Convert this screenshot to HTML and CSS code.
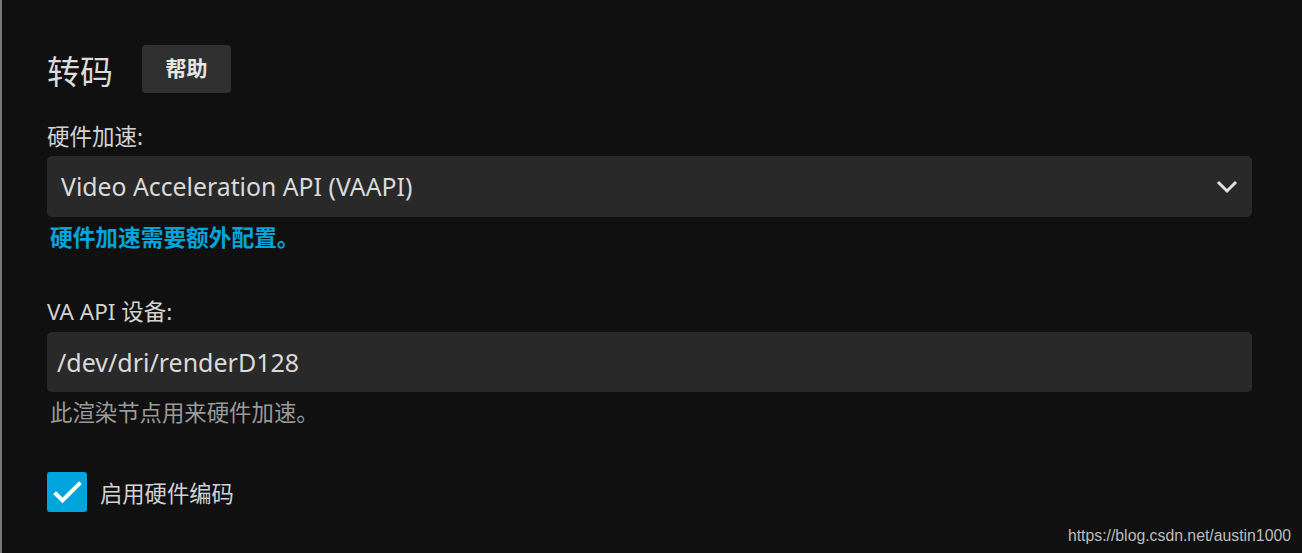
FILE: index.html
```html
<!DOCTYPE html>
<html lang="zh">
<head>
<meta charset="utf-8">
<title>转码</title>
<link rel="stylesheet" href="styles.css">
</head>
<body>
<div class="page">
  <div class="header">
    <h2 class="title">转码</h2>
    <button class="help">帮助</button>
  </div>

  <label class="label label-first">硬件加速:</label>
  <div class="select">
    <span class="select-text">Video Acceleration API (VAAPI)</span>
    <svg class="chevron" width="24" height="24" viewBox="0 0 24 24"><path d="M3 7 L12 16 L21 7" fill="none" stroke="#e0e0e0" stroke-width="3"/></svg>
  </div>
  <div class="hint">硬件加速需要额外配置。</div>

  <label class="label label-second">VA API 设备:</label>
  <div class="input">/dev/dri/renderD128</div>
  <div class="desc">此渲染节点用来硬件加速。</div>

  <div class="check-row">
    <span class="checkbox">
      <svg width="40" height="40" viewBox="0 0 40 40"><path d="M9 22 L15.5 28.5 L32 12" fill="none" stroke="#fff" stroke-width="4" stroke-linecap="square"/></svg>
    </span>
    <span class="check-label">启用硬件编码</span>
  </div>
</div>
<div class="watermark">https://blog.csdn.net/austin1000</div>
</body>
</html>
```

FILE: styles.css
```css
html, body {
  margin: 0;
  padding: 0;
  height: 100%;
}
body {
  background: #101010;
  font-family: "Noto Sans", "Noto Sans CJK SC", sans-serif;
  color: #d6d6d6;
  position: relative;
  overflow: hidden;
}
.page {
  border-left: 2px solid #7a7a7a;
  min-height: 100%;
  box-sizing: border-box;
  padding: 45px 50px 0 45px;
  display: flex;
  flex-direction: column;
}
.header {
  display: flex;
  align-items: center;
  gap: 29px;
  height: 48px;
}
.title {
  margin: 6px 0 0 0;
  font-size: 33px;
  font-weight: 400;
  color: #dcdcdc;
  line-height: 48px;
}
.help {
  width: 89px;
  height: 48px;
  border: none;
  border-radius: 4px;
  background: #303030;
  color: #e6e6e6;
  font-family: "Noto Sans", "Noto Sans CJK SC", sans-serif;
  font-size: 21px;
  font-weight: 700;
  padding: 0 0 5px 0;
}
.label {
  display: block;
  font-size: 22.5px;
  line-height: 30px;
  height: 30px;
  color: #d2d2d2;
}
.label-first {
  margin-top: 29px;
  margin-bottom: 4px;
}
.label-second {
  margin-top: 44px;
  margin-bottom: 5px;
}
.select {
  height: 61px;
  border-radius: 5px;
  background: #292929;
  display: flex;
  align-items: center;
  justify-content: space-between;
  padding: 0 13px 0 14px;
}
.select-text {
  font-size: 24.8px;
  color: #dadada;
  padding-bottom: 2px;
}
.chevron {
  margin-top: 1px;
}
.hint {
  margin-top: 6px;
  margin-left: 3px;
  font-size: 22.7px;
  line-height: 30px;
  font-weight: 700;
  color: #00a4dc;
}
.input {
  height: 60px;
  border-radius: 5px;
  background: #292929;
  display: flex;
  align-items: center;
  padding: 0 10px;
  font-size: 25px;
  color: #dadada;
  box-sizing: border-box;
}
.desc {
  margin-top: 6px;
  margin-left: 3px;
  font-size: 22.4px;
  line-height: 30px;
  color: #9a9a9a;
}
.check-row {
  margin-top: 44px;
  display: flex;
  align-items: center;
  gap: 13px;
}
.checkbox {
  width: 40px;
  height: 40px;
  border-radius: 3px;
  background: #00a4dc;
  display: flex;
}
.check-label {
  font-size: 22.3px;
  color: #d2d2d2;
}
.watermark {
  position: absolute;
  right: 11px;
  bottom: 8px;
  font-family: "Liberation Sans", Arial, sans-serif;
  font-size: 15.8px;
  color: #bdbdbd;
}
```
